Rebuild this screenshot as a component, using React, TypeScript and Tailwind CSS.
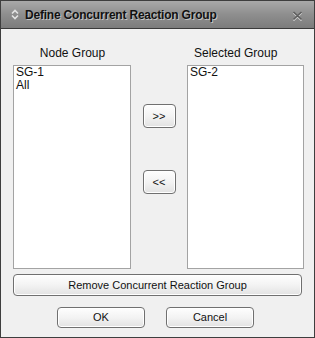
import React from "react";

const btn =
  "flex items-center justify-center rounded-[4px] border border-[#707070] bg-[linear-gradient(#fefefe,#f3f3f3_50%,#e2e2e2)] text-[11px] text-[#111] leading-none shadow-[inset_0_0_0_1px_#ffffff]";

export default function App() {
  return (
    <div
      className="w-[315px] h-[338px] flex flex-col bg-[#f0f0f0] border border-[#3e3e3e]"
      style={{ fontFamily: '"Liberation Sans", Arial, sans-serif' }}
    >
      {/* Title bar */}
      <div className="h-[28px] shrink-0 flex items-center bg-[linear-gradient(#a9a9a9,#8e8e8e_50%,#7c7c7c)] border-b border-[#3a3a3a]">
        <svg width="8" height="11" viewBox="0 0 8 11" className="ml-[10px]">
          <path d="M1 4.5 L4 1.5 L7 4.5" fill="none" stroke="#e4e4e4" strokeWidth="1.6" />
          <path d="M1 6.5 L4 9.5 L7 6.5" fill="none" stroke="#e4e4e4" strokeWidth="1.6" />
        </svg>
        <span className="ml-[6px] text-[12px] font-bold text-[#111] [text-shadow:1px_1px_0_#c4c4c4] tracking-[-0.2px]">
          Define Concurrent Reaction Group
        </span>
        <svg width="11" height="11" viewBox="0 0 11 11" className="ml-auto mr-[11px] mt-[1px]">
          <path d="M1.5 2 L9.5 9.5 M9.5 2 L1.5 9.5" stroke="#d6d6d6" strokeWidth="1.6" transform="translate(0,1)" />
          <path d="M1.5 2 L9.5 9.5 M9.5 2 L1.5 9.5" stroke="#5e5e5e" strokeWidth="1.6" />
        </svg>
      </div>

      {/* Body */}
      <div className="flex-1 flex flex-col pl-[12px] pr-[10px] pt-[16px]">
        <div className="flex">
          {/* Left column */}
          <div className="w-[118px] flex flex-col">
            <div className="h-[16px] leading-[16px] text-[12px] text-[#111] text-center pl-[1px]">
              Node Group
            </div>
            <div className="mt-[4px] h-[204px] bg-white border border-[#a3a3a3] pl-[2px] text-[12px] leading-[13px] text-[#111]">
              <div>SG-1</div>
              <div>All</div>
            </div>
          </div>

          {/* Middle */}
          <div className="w-[56px] flex flex-col items-center">
            <button className={`${btn} w-[33px] h-[24px] mt-[59px]`}>&gt;&gt;</button>
            <button className={`${btn} w-[33px] h-[24px] mt-[42px]`}>&lt;&lt;</button>
          </div>

          {/* Right column */}
          <div className="w-[117px] flex flex-col">
            <div className="h-[16px] leading-[16px] text-[12px] text-[#111] pl-[7px]">
              Selected Group
            </div>
            <div className="mt-[4px] h-[204px] bg-white border border-[#a3a3a3] pl-[2px] text-[12px] leading-[13px] text-[#111]">
              <div>SG-2</div>
            </div>
          </div>
        </div>

        <button className={`${btn} w-[289px] h-[22px] mt-[5px]`}>
          Remove Concurrent Reaction Group
        </button>

        <div className="flex mt-[11px]">
          <button className={`${btn} w-[88px] h-[21px] ml-[44px]`}>OK</button>
          <button className={`${btn} w-[88px] h-[21px] ml-[21px]`}>Cancel</button>
        </div>
      </div>
    </div>
  );
}
